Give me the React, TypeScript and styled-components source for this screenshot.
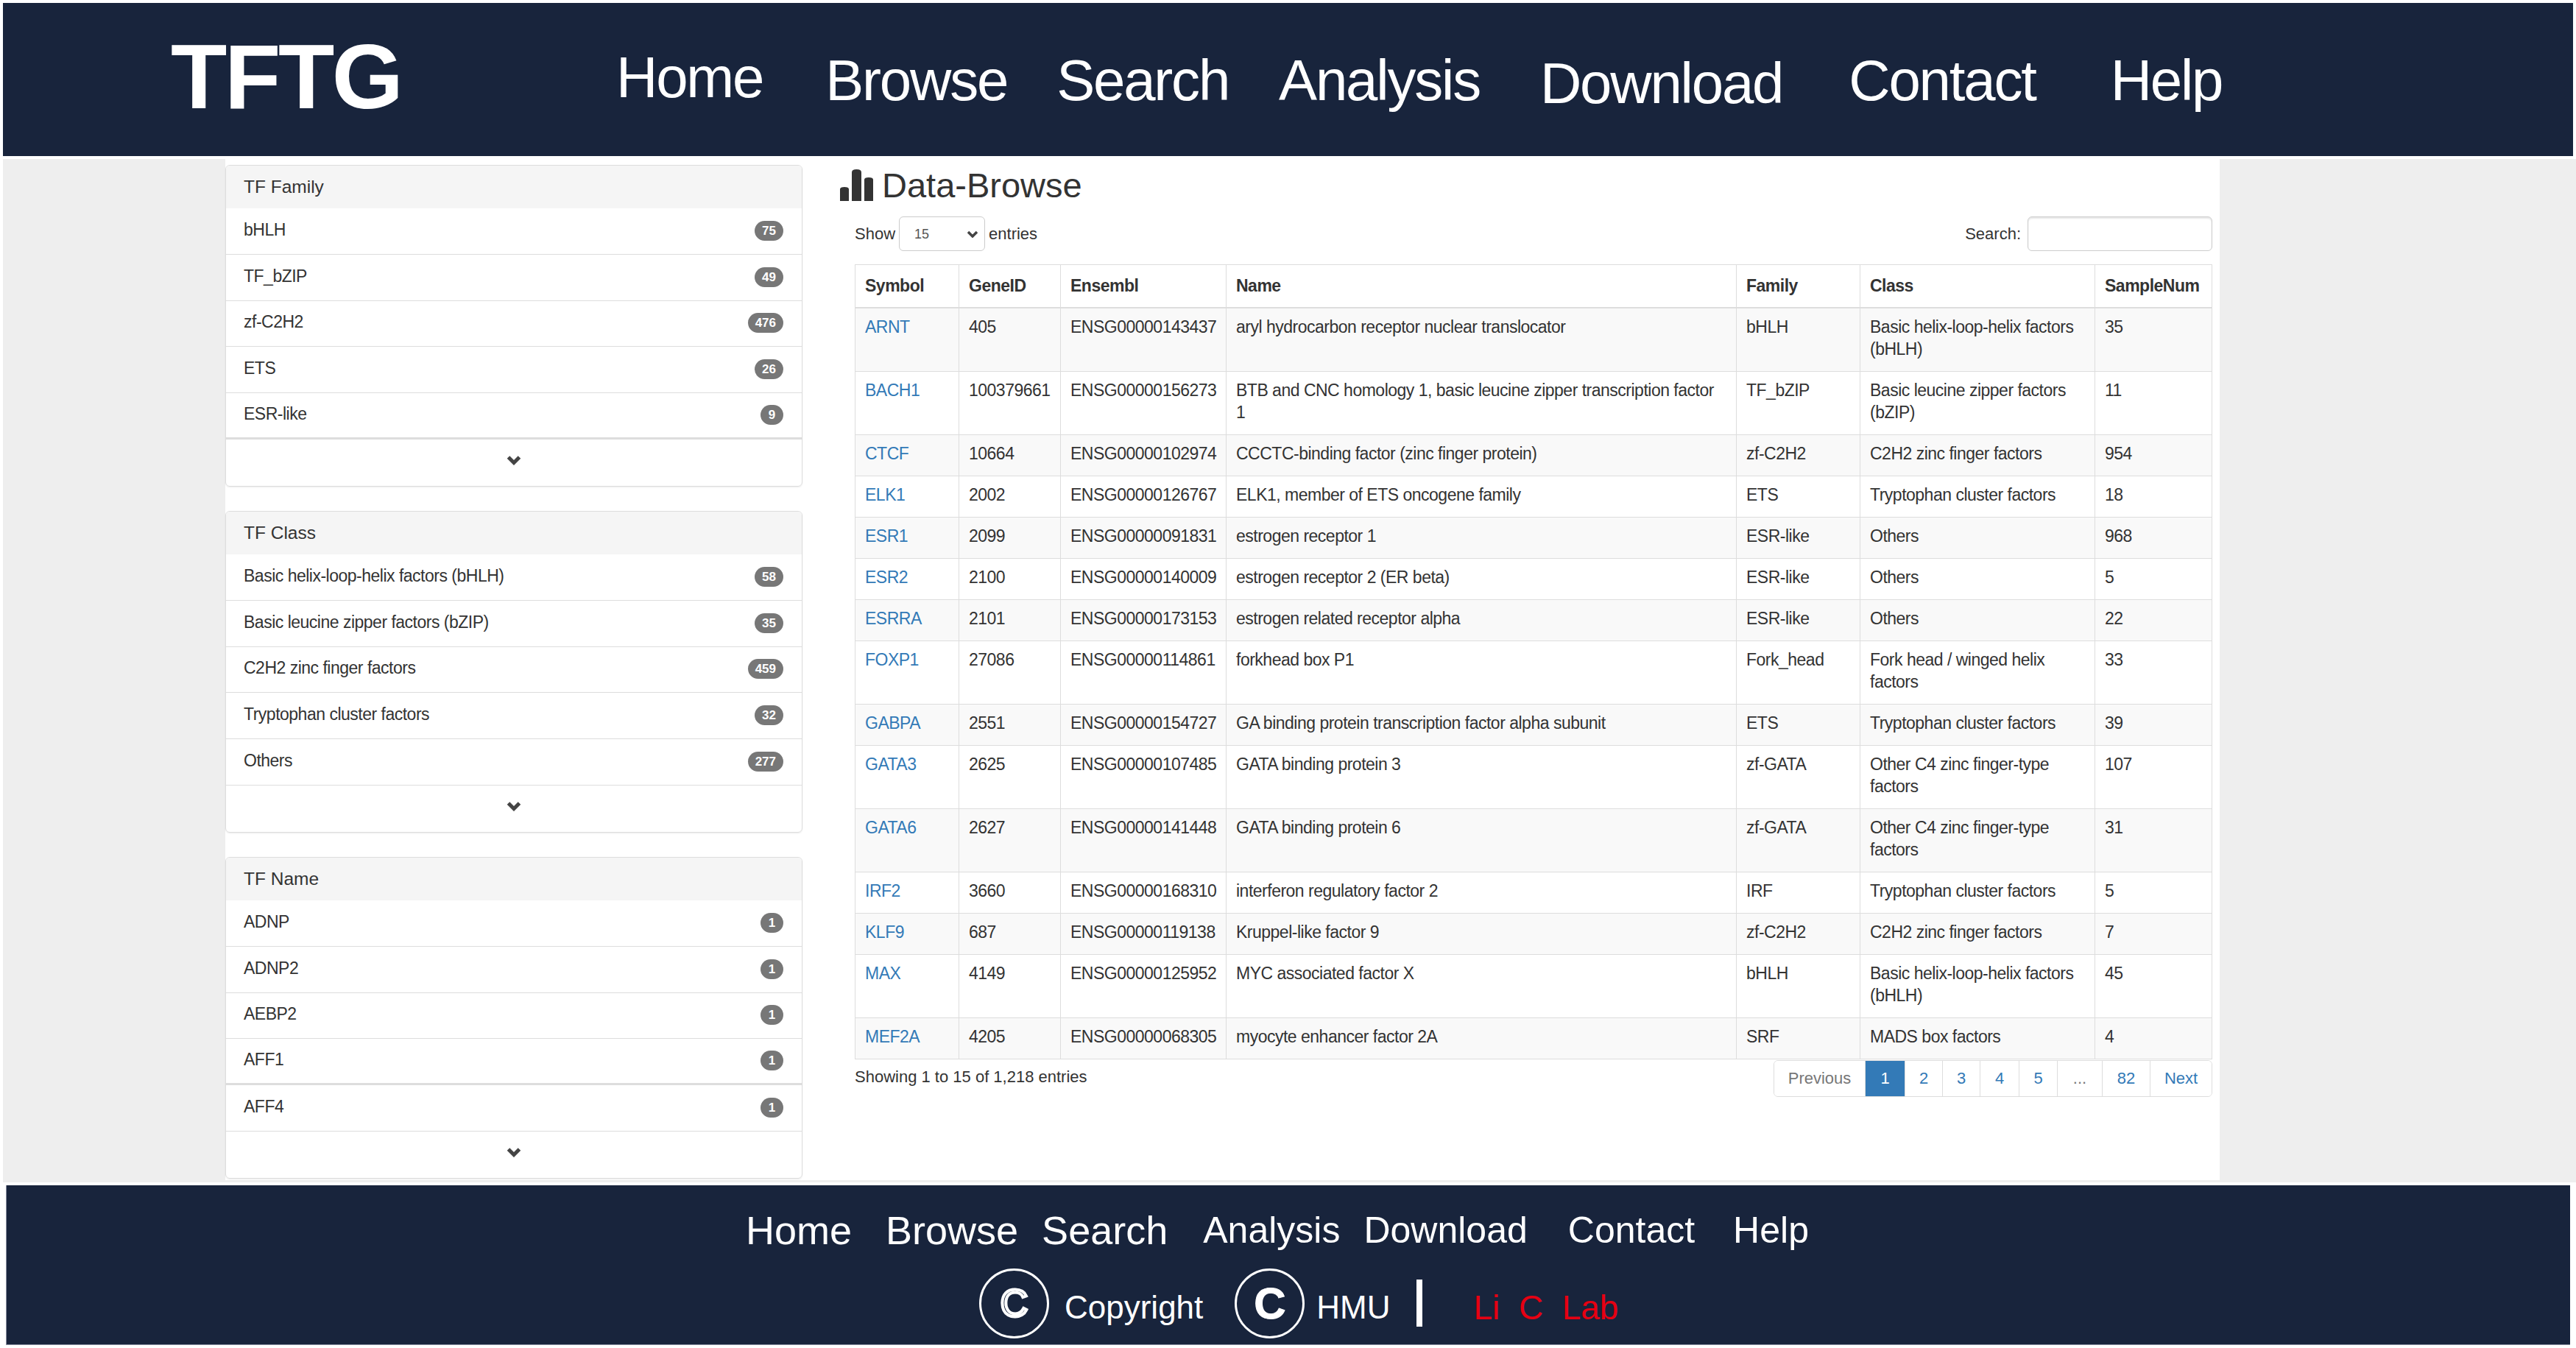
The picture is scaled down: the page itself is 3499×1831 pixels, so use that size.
import React from "react"
import styled, { createGlobalStyle } from "styled-components"

const navItems = [
    { label: "Home", gap: 0, drop: 0 },
    { label: "Browse", gap: 85, drop: 4 },
    { label: "Search", gap: 67, drop: 4 },
    { label: "Analysis", gap: 68, drop: 4 },
    { label: "Download", gap: 82, drop: 8 },
    { label: "Contact", gap: 90, drop: 4 },
    { label: "Help", gap: 102, drop: 4 },
]

const footerItems = [
    { label: "Home", gap: 0, size: 54 },
    { label: "Browse", gap: 46, size: 54 },
    { label: "Search", gap: 32, size: 54 },
    { label: "Analysis", gap: 48, size: 50 },
    { label: "Download", gap: 32, size: 50 },
    { label: "Contact", gap: 55, size: 50 },
    { label: "Help", gap: 52, size: 50 },
]

const panels = [
    {
        title: "TF Family",
        thickAt: 4,
        items: [["bHLH", "75"], ["TF_bZIP", "49"], ["zf-C2H2", "476"], ["ETS", "26"], ["ESR-like", "9"]],
    },
    {
        title: "TF Class",
        thickAt: -1,
        items: [
            ["Basic helix-loop-helix factors (bHLH)", "58"],
            ["Basic leucine zipper factors (bZIP)", "35"],
            ["C2H2 zinc finger factors", "459"],
            ["Tryptophan cluster factors", "32"],
            ["Others", "277"],
        ],
    },
    {
        title: "TF Name",
        thickAt: 3,
        items: [["ADNP", "1"], ["ADNP2", "1"], ["AEBP2", "1"], ["AFF1", "1"], ["AFF4", "1"]],
    },
]

const columns = [
    { label: "Symbol", width: 141 },
    { label: "GeneID", width: 138 },
    { label: "Ensembl", width: 225 },
    { label: "Name", width: 693 },
    { label: "Family", width: 168 },
    { label: "Class", width: 319 },
    { label: "SampleNum", width: 159 },
]

const rows = [
    ["ARNT", "405", "ENSG00000143437", "aryl hydrocarbon receptor nuclear translocator", "bHLH", "Basic helix-loop-helix factors (bHLH)", "35"],
    ["BACH1", "100379661", "ENSG00000156273", "BTB and CNC homology 1, basic leucine zipper transcription factor 1", "TF_bZIP", "Basic leucine zipper factors (bZIP)", "11"],
    ["CTCF", "10664", "ENSG00000102974", "CCCTC-binding factor (zinc finger protein)", "zf-C2H2", "C2H2 zinc finger factors", "954"],
    ["ELK1", "2002", "ENSG00000126767", "ELK1, member of ETS oncogene family", "ETS", "Tryptophan cluster factors", "18"],
    ["ESR1", "2099", "ENSG00000091831", "estrogen receptor 1", "ESR-like", "Others", "968"],
    ["ESR2", "2100", "ENSG00000140009", "estrogen receptor 2 (ER beta)", "ESR-like", "Others", "5"],
    ["ESRRA", "2101", "ENSG00000173153", "estrogen related receptor alpha", "ESR-like", "Others", "22"],
    ["FOXP1", "27086", "ENSG00000114861", "forkhead box P1", "Fork_head", "Fork head / winged helix factors", "33"],
    ["GABPA", "2551", "ENSG00000154727", "GA binding protein transcription factor alpha subunit", "ETS", "Tryptophan cluster factors", "39"],
    ["GATA3", "2625", "ENSG00000107485", "GATA binding protein 3", "zf-GATA", "Other C4 zinc finger-type factors", "107"],
    ["GATA6", "2627", "ENSG00000141448", "GATA binding protein 6", "zf-GATA", "Other C4 zinc finger-type factors", "31"],
    ["IRF2", "3660", "ENSG00000168310", "interferon regulatory factor 2", "IRF", "Tryptophan cluster factors", "5"],
    ["KLF9", "687", "ENSG00000119138", "Kruppel-like factor 9", "zf-C2H2", "C2H2 zinc finger factors", "7"],
    ["MAX", "4149", "ENSG00000125952", "MYC associated factor X", "bHLH", "Basic helix-loop-helix factors (bHLH)", "45"],
    ["MEF2A", "4205", "ENSG00000068305", "myocyte enhancer factor 2A", "SRF", "MADS box factors", "4"],
]

const pages = [
    { label: "Previous", width: 123, muted: true },
    { label: "1", width: 54, active: true },
    { label: "2", width: 51 },
    { label: "3", width: 51 },
    { label: "4", width: 53 },
    { label: "5", width: 52 },
    { label: "...", width: 61, muted: true },
    { label: "82", width: 65 },
    { label: "Next", width: 84 },
]

const selectArrow =
    "data:image/svg+xml;utf8,<svg xmlns='http://www.w3.org/2000/svg' width='16' height='10'><path d='M2 2 L8 8 L14 2' fill='none' stroke='%23444' stroke-width='3.5'/></svg>"

const Chevron = () => (
    <svg width="20" height="14" viewBox="0 0 20 14">
        <path d="M2.5 3 L10 10.5 L17.5 3" fill="none" stroke="#444" strokeWidth="5" />
    </svg>
)

const StatsIcon = () => (
    <svg width="45" height="43" viewBox="0 0 45 43">
        <path d="M0 43 V27 Q0 24 6 24 Q12 24 12 27 V43 Z" fill="#333" />
        <path d="M16 43 V4 Q16 0 22.5 0 Q29 0 29 4 V43 Z" fill="#333" />
        <path d="M33 43 V14 Q33 11 39 11 Q45 11 45 14 V43 Z" fill="#333" />
    </svg>
)

export default function App() {
    return (
        <>
            <GlobalStyle />
            <Header>
                <Brand>TFTG</Brand>
                <Nav>
                    {navItems.map((item) => (
                        <NavLink key={item.label} $gap={item.gap} $drop={item.drop}>{item.label}</NavLink>
                    ))}
                </Nav>
            </Header>
            <Main>
                <Container>
                    <Sidebar>
                        {panels.map((panel) => (
                            <Panel key={panel.title}>
                                <PanelTitle>{panel.title}</PanelTitle>
                                {panel.items.map(([name, count], index) => (
                                    <PanelRow key={name} $thick={index === panel.thickAt}>
                                        <RowName>{name}</RowName>
                                        <Badge>{count}</Badge>
                                    </PanelRow>
                                ))}
                                <PanelMore><Chevron /></PanelMore>
                            </Panel>
                        ))}
                    </Sidebar>
                    <Content>
                        <Title>
                            <StatsIcon />
                            <TitleText>Data-Browse</TitleText>
                        </Title>
                        <Body>
                            <Tools>
                                <ToolGroup>
                                    Show
                                    <EntriesSelect defaultValue="15">
                                        <option value="15">15</option>
                                    </EntriesSelect>
                                    entries
                                </ToolGroup>
                                <ToolGroup>
                                    Search:
                                    <SearchInput />
                                </ToolGroup>
                            </Tools>
                            <Table>
                                <colgroup>
                                    {columns.map((column) => (
                                        <col key={column.label} width={column.width} />
                                    ))}
                                </colgroup>
                                <thead>
                                    <tr>
                                        {columns.map((column) => (
                                            <HeadCell key={column.label}>{column.label}</HeadCell>
                                        ))}
                                    </tr>
                                </thead>
                                <tbody>
                                    {rows.map((row) => (
                                        <BodyRow key={row[0]}>
                                            {row.map((value, index) => (
                                                <BodyCell key={index}>
                                                    {index === 0 ? <SymbolLink>{value}</SymbolLink> : value}
                                                </BodyCell>
                                            ))}
                                        </BodyRow>
                                    ))}
                                </tbody>
                            </Table>
                            <TableFooter>
                                <Info>Showing 1 to 15 of 1,218 entries</Info>
                                <Pagination>
                                    {pages.map((page) => (
                                        <PageItem key={page.label} $width={page.width} $active={page.active} $muted={page.muted}>
                                            {page.label}
                                        </PageItem>
                                    ))}
                                </Pagination>
                            </TableFooter>
                        </Body>
                    </Content>
                </Container>
            </Main>
            <Footer>
                <FooterNav>
                    {footerItems.map((item) => (
                        <FooterLink key={item.label} $gap={item.gap} $size={item.size}>{item.label}</FooterLink>
                    ))}
                </FooterNav>
                <FooterInfo>
                    <CopyMark $outlined>C</CopyMark>
                    <FooterText $before={21} $after={43}>Copyright</FooterText>
                    <CopyMark>C</CopyMark>
                    <FooterText $before={16} $after={35}>HMU</FooterText>
                    <Divider />
                    <LabName>Li&nbsp; C&nbsp; Lab</LabName>
                </FooterInfo>
            </Footer>
        </>
    )
}

const GlobalStyle = createGlobalStyle`
    html, body {
        margin: 0;
        padding: 0;
        background: #fff;
        overflow: hidden;
    }
    body {
        width: 3499px;
        height: 1831px;
        font-family: "Liberation Sans", Arial, sans-serif;
        color: #333;
    }
    * {
        box-sizing: border-box;
    }
`

const Header = styled.header`
    display: flex;
    align-items: flex-start;
    height: 208px;
    margin: 4px 4px 0;
    padding-left: 228px;
    background: #18243c;
    color: #fff;
`

const Brand = styled.div`
    width: 317px;
    margin-top: 31px;
    font-size: 125px;
    line-height: 138px;
    font-weight: 700;
    letter-spacing: -3.4px;
`

const Nav = styled.nav`
    display: flex;
    align-items: flex-start;
    margin-left: 288px;
    padding-top: 59px;
`

const NavLink = styled.a<{ $gap: number; $drop: number }>`
    margin-left: ${({ $gap }) => $gap}px;
    margin-top: ${({ $drop }) => $drop}px;
    font-size: 78px;
    line-height: 85px;
    letter-spacing: -2.2px;
`

const Main = styled.main`
    height: 1390px;
    margin: 4px 0 0 4px;
    padding-left: 302px;
    background: #eee;
`

const Container = styled.div`
    display: flex;
    width: 2709px;
    height: 1387px;
    padding-top: 8px;
    background: #fff;
`

const Sidebar = styled.aside`
    display: flex;
    flex-direction: column;
    gap: 33px;
    width: 784px;
    flex-shrink: 0;
`

const Panel = styled.section`
    display: flex;
    flex-direction: column;
    height: 437px;
    border: 1px solid #ddd;
    border-radius: 6px;
    box-shadow: 0 1px 2px rgba(0, 0, 0, 0.08);
    overflow: hidden;
`

const PanelTitle = styled.div`
    display: flex;
    align-items: center;
    height: 58px;
    padding-left: 24px;
    background: #f5f5f5;
    color: #333;
    font-size: 24.5px;
`

const PanelRow = styled.div<{ $thick?: boolean }>`
    display: flex;
    align-items: center;
    justify-content: space-between;
    height: 62.8px;
    padding: 0 25px 0 24px;
    border-bottom: ${({ $thick }) => ($thick ? "3px" : "1px")} solid #ddd;
    color: #333;
    font-size: 23px;
    letter-spacing: -0.5px;
`

const RowName = styled.span`
    padding-bottom: 3px;
`

const Badge = styled.span`
    min-width: 31px;
    height: 27px;
    padding: 0 10px;
    margin-bottom: 1px;
    border-radius: 14px;
    background: #777;
    color: #fff;
    font-size: 17px;
    line-height: 27px;
    font-weight: 700;
    letter-spacing: 0;
    text-align: center;
`

const PanelMore = styled.div`
    display: flex;
    flex: 1;
    align-items: center;
    justify-content: center;
    padding-bottom: 6px;
`

const Content = styled.div`
    flex: 1;
    padding: 0 12px 0 51px;
`

const Title = styled.div`
    display: flex;
    align-items: center;
    gap: 12px;
    height: 70px;
    padding-bottom: 15px;
`

const TitleText = styled.h3`
    margin: 0;
    font-size: 47px;
    line-height: 54px;
    font-weight: 400;
    color: #333;
`

const Body = styled.div`
    padding-left: 20px;
`

const Tools = styled.div`
    display: flex;
    justify-content: space-between;
    height: 47px;
    font-size: 22px;
`

const ToolGroup = styled.label`
    display: flex;
    align-items: center;
    gap: 5px;
`

const EntriesSelect = styled.select`
    width: 117px;
    height: 47px;
    padding-left: 20px;
    border: 1px solid #ccc;
    border-radius: 6px;
    appearance: none;
    background: #fff url("${selectArrow}") no-repeat right 8px center;
    color: #555;
    font-family: inherit;
    font-size: 18px;
`

const SearchInput = styled.input`
    width: 251px;
    height: 47px;
    margin-left: 4px;
    border: 1px solid #ccc;
    border-radius: 6px;
    background: #fff;
    box-shadow: inset 0 2px 2px rgba(0, 0, 0, 0.1);
`

const Table = styled.table`
    width: 1843px;
    margin-top: 18px;
    border-collapse: collapse;
    table-layout: fixed;
    font-size: 23px;
    line-height: 30px;
    letter-spacing: -0.5px;
`

const HeadCell = styled.th`
    height: 58px;
    padding: 0 13px;
    border: 1px solid #ddd;
    border-bottom-width: 2px;
    text-align: left;
    font-weight: 700;
`

const BodyRow = styled.tr`
    &:nth-child(odd) {
        background: #f9f9f9;
    }
`

const BodyCell = styled.td`
    padding: 10px 13px 15px;
    border: 1px solid #ddd;
    vertical-align: top;
`

const SymbolLink = styled.a`
    color: #337ab7;
`

const TableFooter = styled.div`
    display: flex;
    align-items: flex-start;
    justify-content: space-between;
    margin-top: 1px;
`

const Info = styled.div`
    padding-top: 8px;
    font-size: 22px;
    line-height: 30px;
`

const Pagination = styled.div`
    display: flex;
    height: 50px;
    border: 1px solid #ddd;
    border-radius: 6px;
    overflow: hidden;
`

const PageItem = styled.span<{ $width: number; $active?: boolean; $muted?: boolean }>`
    display: flex;
    align-items: center;
    justify-content: center;
    width: ${({ $width }) => $width}px;
    border-left: 1px solid #ddd;
    background: ${({ $active }) => ($active ? "#337ab7" : "#fff")};
    color: ${({ $active, $muted }) => ($active ? "#fff" : $muted ? "#777" : "#337ab7")};
    font-size: 22px;

    &:first-child {
        border-left: 0;
    }
`

const Footer = styled.footer`
    width: 3483px;
    height: 217px;
    margin: 4px 0 0 8px;
    padding-top: 30px;
    border-left: 1px solid #8a8fa0;
    border-bottom: 1px solid #8a8fa0;
    background: #18243c;
    color: #fff;
`

const FooterNav = styled.nav`
    display: flex;
    align-items: center;
    height: 62px;
    padding-left: 1004px;
`

const FooterLink = styled.a<{ $gap: number; $size: number }>`
    margin-left: ${({ $gap }) => $gap}px;
    font-size: ${({ $size }) => $size}px;
    line-height: 62px;
`

const FooterInfo = styled.div`
    display: flex;
    align-items: center;
    height: 96px;
    margin-top: 20px;
    padding-left: 1321px;
`

const CopyMark = styled.span<{ $outlined?: boolean }>`
    display: flex;
    align-items: center;
    justify-content: center;
    width: 95px;
    height: 95px;
    border: 3px solid #fff;
    border-radius: 50%;
    font-size: ${({ $outlined }) => ($outlined ? "52px" : "60px")};
    font-weight: ${({ $outlined }) => ($outlined ? 400 : 700)};
    color: ${({ $outlined }) => ($outlined ? "#18243c" : "#fff")};
    -webkit-text-stroke: ${({ $outlined }) => ($outlined ? "4px #fff" : "1px #fff")};
`

const FooterText = styled.span<{ $before: number; $after: number }>`
    margin: 0 ${({ $after }) => $after}px 0 ${({ $before }) => $before}px;
    padding-top: 12px;
    font-size: 44px;
    line-height: 52px;
`

const Divider = styled.span`
    width: 8px;
    height: 64px;
    background: #fff;
`

const LabName = styled.span`
    margin-left: 70px;
    padding-top: 12px;
    color: #e60012;
    font-size: 46px;
    line-height: 54px;
`
